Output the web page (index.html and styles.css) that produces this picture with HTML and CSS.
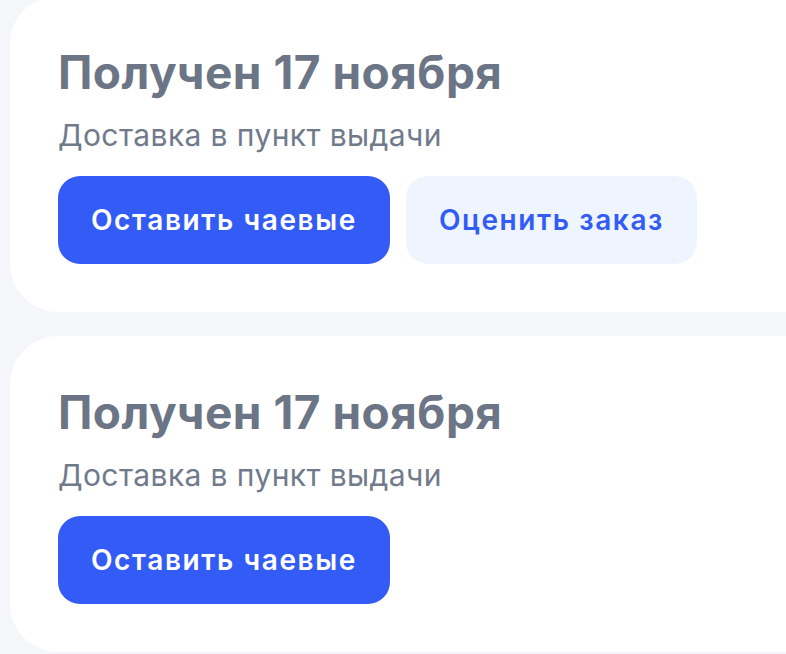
FILE: index.html
```html
<!DOCTYPE html>
<html lang="ru">
<head>
<meta charset="utf-8">
<link rel="stylesheet" href="styles.css">
</head>
<body>
<div class="list">
  <section class="card">
    <h2 class="title">Получен 17 ноября</h2>
    <p class="sub">Доставка в пункт выдачи</p>
    <div class="actions">
      <button class="btn btn-primary">Оставить чаевые</button>
      <button class="btn btn-secondary">Оценить заказ</button>
    </div>
  </section>
  <section class="card">
    <h2 class="title">Получен 17 ноября</h2>
    <p class="sub">Доставка в пункт выдачи</p>
    <div class="actions">
      <button class="btn btn-primary">Оставить чаевые</button>
    </div>
  </section>
</div>
</body>
</html>
```
FILE: styles.css
```css
html, body {
  margin: 0;
  padding: 0;
  background: #f5f6fa;
  font-family: Inter, "Noto Sans", sans-serif;
  overflow: hidden;
}
.list {
  display: flex;
  flex-direction: column;
  gap: 24px;
  margin-top: -4px;
  padding-left: 10px;
  margin-right: -60px;
}
.card {
  background: #ffffff;
  border-radius: 48px;
  padding: 48px 48px 48px 48px;
  height: 316px;
  box-sizing: border-box;
  display: flex;
  flex-direction: column;
}
.title {
  margin: 0;
  font-size: 46px;
  line-height: 56px;
  font-weight: 700;
  color: #6c7586;
  letter-spacing: 0.5px;
}
.sub {
  margin: 17px 0 0;
  font-size: 30px;
  line-height: 36px;
  font-weight: 400;
  color: #707a8b;
  letter-spacing: 0.4px;
}
.actions {
  display: flex;
  gap: 16px;
  margin-top: auto;
}
.btn {
  border: none;
  height: 88px;
  border-radius: 22px;
  padding: 0 33px;
  font-family: inherit;
  font-size: 28px;
  font-weight: 600;
  letter-spacing: 1.6px;
  cursor: pointer;
}
.btn-primary {
  background: #335cf6;
  color: #ffffff;
}
.btn-secondary {
  background: #eef5ff;
  color: #335cf6;
}
```
